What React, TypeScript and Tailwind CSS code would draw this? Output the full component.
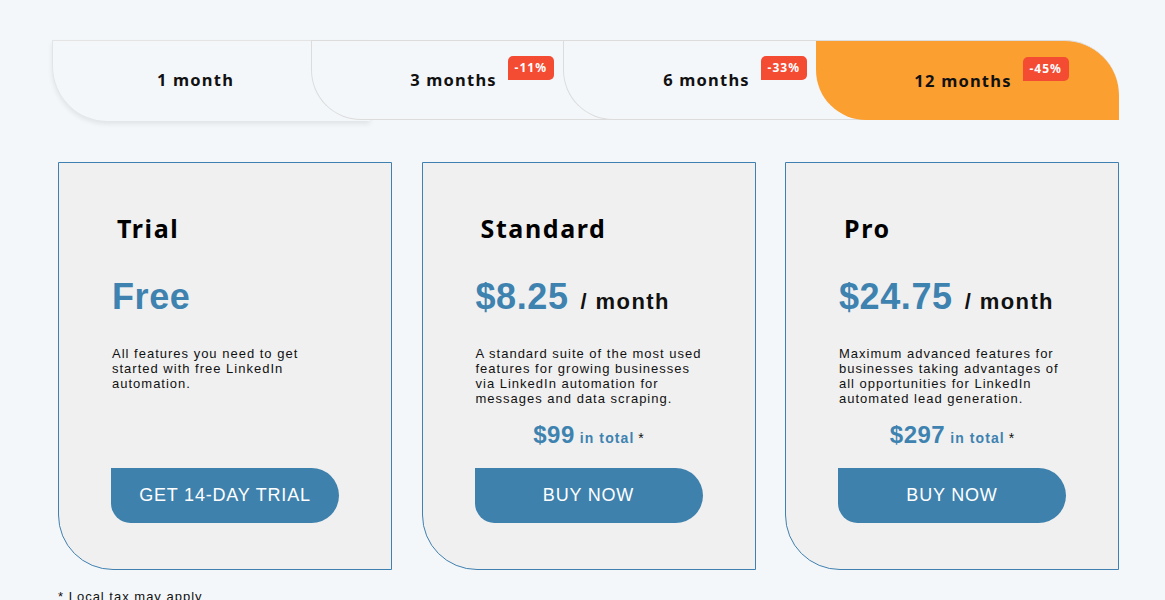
import React from "react";

const sans = "font-['Liberation_Sans',Arial,sans-serif]";
const noto = "font-['Noto_Sans',sans-serif]";

function Badge({ text }: { text: string }) {
  return (
    <span
      className={`absolute left-[calc(100%+11px)] top-[-12px] w-[46px] h-[24px] flex items-center justify-center bg-[#f44b33] text-white text-[12px] font-bold tracking-[1px] rounded-[5px] rounded-bl-none ${noto}`}
    >
      {text}
    </span>
  );
}

type Plan = {
  name: string;
  price: string;
  per?: boolean;
  desc: string;
  total?: string;
  button: string;
};

const plans: Plan[] = [
  {
    name: "Trial",
    price: "Free",
    desc: "All features you need to get started with free LinkedIn automation.",
    button: "GET 14-DAY TRIAL",
  },
  {
    name: "Standard",
    price: "$8.25",
    per: true,
    desc: "A standard suite of the most used features for growing businesses via LinkedIn automation for messages and data scraping.",
    total: "$99",
    button: "BUY NOW",
  },
  {
    name: "Pro",
    price: "$24.75",
    per: true,
    desc: "Maximum advanced features for businesses taking advantages of all opportunities for LinkedIn automated lead generation.",
    total: "$297",
    button: "BUY NOW",
  },
];

function Card({ p }: { p: Plan }) {
  return (
    <div className="w-[334px] h-[408px] border border-[#3f80b0] bg-[#f0f0f0] rounded-bl-[55px] flex flex-col pt-[48px]">
      <div className={`ml-[58px] h-[34px] leading-[34px] text-[25px] font-bold tracking-[1.6px] text-black ${noto}`}>
        {p.name}
      </div>
      <div className={`ml-[53px] mt-[32px] h-[40px] leading-[40px] flex items-baseline gap-[12px] ${sans}`}>
        <span className="text-[36px] font-bold text-[#3e82b0] tracking-[0.6px]">{p.price}</span>
        {p.per && <span className="text-[22px] font-bold text-[#111] tracking-[1.4px]">/ month</span>}
      </div>
      <div className={`ml-[53px] mt-[29px] w-[230px] text-[13px] leading-[15px] tracking-[1px] text-[#111] ${sans}`}>
        {p.desc}
      </div>
      {p.total && (
        <div className={`mt-[14px] h-[30px] leading-[30px] text-center ${sans}`}>
          <span className="text-[24px] font-bold text-[#3e82b0] tracking-[0.5px]">{p.total}</span>
          <span className="text-[14px] font-bold text-[#3e82b0] tracking-[1.1px]"> in total</span>
          <span className="text-[14px] text-[#111]"> *</span>
        </div>
      )}
      <button
        className={`mt-auto mb-[46px] ml-[52px] w-[228px] h-[55px] bg-[#3e81ad] text-white text-[18px] tracking-[0.8px] rounded-tr-[28px] rounded-br-[28px] rounded-bl-[20px] flex items-center justify-center ${sans}`}
      >
        {p.button}
      </button>
    </div>
  );
}

export default function App() {
  return (
    <div className="min-h-[600px] bg-[#f4f7fa] pt-[40px] overflow-hidden">
      <div className={`flex items-start pl-[52px] ${noto}`}>
        <div className="w-[318px] h-[81px] border-t border-l border-[#e4e4e4] rounded-bl-[55px] bg-[#f4f7fa] shadow-[0_3px_5px_rgba(0,0,0,0.08)] flex items-center justify-center pr-[32px] pb-[2px]">
          <span className="text-[16.5px] font-bold tracking-[1.2px] text-[#111]">1 month</span>
        </div>
        <div className="ml-[-59px] w-[302px] h-[80px] border border-r-0 border-[#dcdcdc] rounded-bl-[50px] bg-[#f4f7fa] flex items-center justify-center pr-[18px]">
          <span className="relative text-[16.5px] leading-[24px] font-bold tracking-[1.2px] text-[#111]">
            3 months
            <Badge text="-11%" />
          </span>
        </div>
        <div className="ml-[-50px] w-[303px] h-[80px] border border-r-0 border-[#dcdcdc] rounded-bl-[50px] bg-[#f4f7fa] flex items-center justify-center pr-[17px]">
          <span className="relative text-[16.5px] leading-[24px] font-bold tracking-[1.2px] text-[#111]">
            6 months
            <Badge text="-33%" />
          </span>
        </div>
        <div className="ml-[-50px] w-[303px] h-[80px] border-t border-[#dcdcdc] rounded-bl-[50px] rounded-tr-[55px] bg-[#fc9f31] flex items-center justify-center pr-[9px]">
          <span className="relative text-[16.5px] leading-[24px] font-bold tracking-[1.2px] text-[#111]">
            12 months
            <Badge text="-45%" />
          </span>
        </div>
      </div>
      <div className="flex gap-[29.5px] pl-[58px] mt-[41px]">
        {plans.map((p) => (
          <Card key={p.name} p={p} />
        ))}
      </div>
      <div className={`ml-[58px] mt-[17px] text-[13px] tracking-[1px] text-[#111] ${sans}`}>
        * Local tax may apply
      </div>
    </div>
  );
}
